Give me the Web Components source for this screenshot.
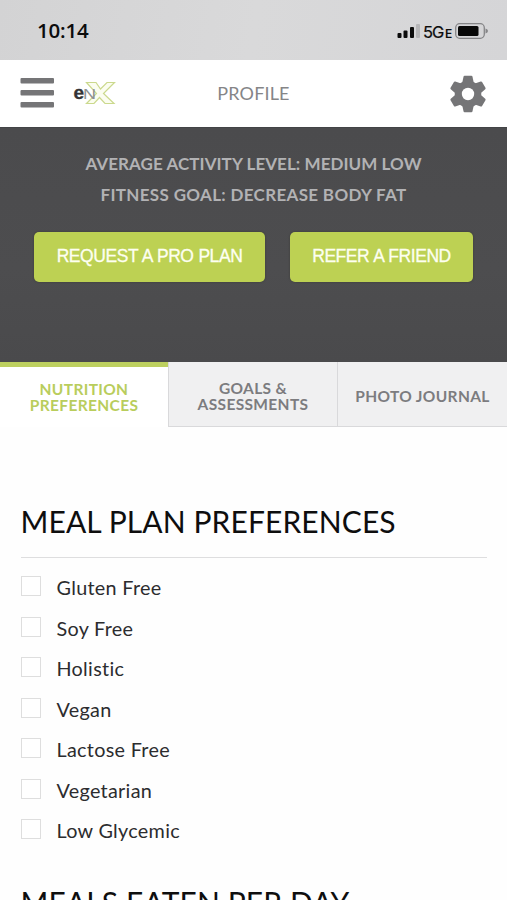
<!DOCTYPE html>
<html lang="en">
<head>
<meta charset="utf-8">
<meta name="viewport" content="width=device-width, initial-scale=1">
<title>Profile</title>
<style>
  body {
    margin: 0;
    height: 900px;
    overflow: hidden;
    background: #fefefe;
    font-family: Lato, sans-serif;
  }
</style>
</head>
<body>
<profile-page></profile-page>

<template id="status-bar">
  <style>
    :host {
      display: flex;
      justify-content: space-between;
      align-items: center;
      height: 60px;
      box-sizing: border-box;
      padding: 3px 19px 0 37px;
      background: linear-gradient(100deg, #d3d3d4, #d9d9da 50%, #d5d5d7);
      color: #0c0c0c;
      font-family: Inter, sans-serif;
    }
    time {
      font: 600 20.5px "Open Sans", sans-serif;
      letter-spacing: -0.2px;
      margin-bottom: 3px;
    }
    .right {
      display: flex;
      align-items: center;
    }
    .net {
      font-size: 16.5px;
      letter-spacing: -1px;
      margin: 1px 0 0 2px;
      width: 22px;
      -webkit-text-stroke: 0.2px;
    }
    .edge {
      font-size: 12px;
      font-weight: 600;
      margin: 4px 3px 0 0;
      width: 7px;
    }
  </style>
  <time>10:14</time>
  <div class="right">
    <svg width="24" height="16" viewBox="0 0 24 16">
      <rect x="0.5" y="9" width="4" height="5" rx="1" fill="#0c0c0c"/>
      <rect x="6.5" y="6.500" width="4" height="7.500" rx="1" fill="#0c0c0c"/>
      <rect x="13" y="3" width="4" height="11" rx="1" fill="#0c0c0c"/>
      <rect x="19" y="0" width="4" height="14" rx="1" fill="#b6b6b8"/>
    </svg>
    <span class="net">5G</span>
    <span class="edge">E</span>
    <svg width="33" height="16" viewBox="0 0 33 16" style="margin-bottom: 1px">
      <rect x="0.7" y="0.7" width="28.600" height="14.600" rx="4" fill="none" stroke="#858587" stroke-width="1.300"/>
      <rect x="3" y="3" width="20.500" height="10" rx="1.500" fill="#080808"/>
      <path d="M30.500 5.500q2.500.8 2.500 2.500t-2.500 2.500z" fill="#858587"/>
    </svg>
  </div>
</template>

<template id="app-header">
  <style>
    :host {
      display: grid;
      grid-template-columns: 1fr auto 1fr;
      align-items: center;
      height: 67px;
      box-sizing: border-box;
      padding: 0 20px;
      background: #fff;
      color: #858587;
    }
    .left {
      display: flex;
      align-items: center;
      gap: 18px;
      margin-bottom: 1px;
    }
    .title {
      font-size: 18px;
      letter-spacing: 0.15px;
      margin-bottom: 2px;
    }
    .gear {
      justify-self: end;
      margin-top: 1px;
    }
    svg {
      display: block;
    }
  </style>
  <div class="left">
    <svg width="34" height="30" viewBox="0 0 34 30" fill="#757577">
      <rect x="0.500" y="0" width="33.500" height="5.500" rx="1"/>
      <rect x="0.500" y="12" width="33.500" height="5.500" rx="1"/>
      <rect x="0.500" y="24" width="33.500" height="5.500" rx="1"/>
    </svg>
    <svg width="44" height="24" viewBox="0 0 44 24">
      <path d="M14.500 1.500H24L28.500 8L35 1.500H42.500L31.500 12.500L42 22.500H33L27.500 16.500L22 22.500H14.500L24.500 12.500Z" fill="#fbfdf0" stroke="#cbd98d" stroke-width="1.200"/>
      <text x="1.500" y="17.500" font-family="Liberation Sans, sans-serif" font-weight="700" font-size="19" fill="#343436" stroke="#343436" stroke-width="0.300">e</text>
      <text x="11" y="17.500" font-family="Liberation Sans, sans-serif" font-size="15.500" fill="#8d9092" textLength="13" lengthAdjust="spacingAndGlyphs">N</text>
    </svg>
  </div>
  <div class="title"><slot></slot></div>
  <svg class="gear" width="38" height="38" viewBox="-19 -19 38 38">
    <g fill="#757577">
      <circle r="13.300"/>
      <path id="cog" d="M-5.600-12L-4.500-17.300Q-4.300-18.200-3.400-18.200H3.400Q4.300-18.200 4.500-17.300L5.600-12V12L4.500 17.300Q4.300 18.200 3.400 18.200H-3.400Q-4.300 18.200-4.500 17.300L-5.600 12Z"/>
      <use href="#cog" transform="rotate(60)"/>
      <use href="#cog" transform="rotate(120)"/>
    </g>
    <circle r="6.200" fill="#fff"/>
  </svg>
</template>

<template id="pro-button">
  <style>
    :host {
      display: block;
    }
    button {
      display: block;
      width: 100%;
      height: 49.5px;
      padding: 0;
      border: 0;
      border-radius: 5px;
      background: #bdd153;
      color: #fdfff0;
      font: 17.5px "Liberation Sans", sans-serif;
      letter-spacing: -0.45px;
      word-spacing: 0.5px;
      -webkit-text-stroke: 0.3px;
      box-shadow: 0 0 2px rgba(40, 40, 30, 0.5);
    }
  </style>
  <button><slot></slot></button>
</template>

<template id="profile-hero">
  <style>
    :host {
      display: block;
      height: 235px;
      box-sizing: border-box;
      padding: 20px 34px 0;
      background: linear-gradient(#4b4b4d, #4d4d4f 60%, #4a4a4c);
      border-top: 1px solid #434446;
      color: #b2b2b4;
      text-align: center;
    }
    p {
      margin: 0;
      font-size: 17px;
      font-weight: 700;
      line-height: 31px;
      letter-spacing: 0.07px;
    }
    .goal {
      letter-spacing: 0.33px;
    }
    .actions {
      display: grid;
      grid-template-columns: 231px 183px;
      gap: 25px;
      margin-top: 22px;
    }
  </style>
  <p>AVERAGE ACTIVITY LEVEL: MEDIUM LOW</p>
  <p class="goal">FITNESS GOAL: DECREASE BODY FAT</p>
  <div class="actions">
    <pro-button>REQUEST A PRO PLAN</pro-button>
    <pro-button>REFER A FRIEND</pro-button>
  </div>
</template>

<template id="tab-item">
  <style>
    :host {
      display: flex;
      align-items: center;
      justify-content: center;
      box-sizing: border-box;
      padding-top: 3px;
      background: #f0f0f1;
      border-left: 1px solid #d9d9db;
      border-bottom: 1px solid #d9d9db;
      color: #7c7c7f;
      font-size: 15.5px;
      font-weight: 700;
      line-height: 16px;
      letter-spacing: 0.35px;
      text-align: center;
    }
    :host([active]) {
      background: #fff;
      border-left: 0;
      border-bottom: 0;
      border-top: 5px solid #bdd05f;
      padding-top: 0;
      color: #b9cd5c;
    }
  </style>
  <span><slot></slot></span>
</template>

<template id="tab-bar">
  <style>
    :host {
      display: grid;
      grid-template-columns: 168px 169px 170px;
      height: 65px;
    }
  </style>
  <slot></slot>
</template>

<template id="check-row">
  <style>
    :host {
      display: block;
      height: 40.5px;
    }
    label {
      display: flex;
      align-items: center;
      gap: 16px;
      color: #2c2c2e;
      font-size: 19.8px;
      line-height: 24px;
      letter-spacing: 0.3px;
    }
    input {
      appearance: none;
      width: 20px;
      height: 20px;
      margin: 0 0 2px;
      border: 1.5px solid #dedede;
      background: #fff;
    }
  </style>
  <label><input type="checkbox"><slot></slot></label>
</template>

<template id="pref-section">
  <style>
    :host {
      display: block;
      padding: 0 20.5px;
    }
    h2 {
      margin: 0 0 17px;
      padding-bottom: 18px;
      border-bottom: 1.5px solid #dededf;
      color: #0e0e0e;
      font-size: 30px;
      font-weight: 400;
      line-height: 36px;
      letter-spacing: 0.1px;
    }
  </style>
  <h2></h2>
  <slot></slot>
</template>

<template id="profile-page">
  <style>
    :host {
      display: block;
    }
    main {
      display: flex;
      flex-direction: column;
      gap: 25px;
      padding-top: 76px;
    }
  </style>
  <status-bar></status-bar>
  <app-header>PROFILE</app-header>
  <profile-hero></profile-hero>
  <tab-bar>
    <tab-item active>NUTRITION<br>PREFERENCES</tab-item>
    <tab-item>GOALS &amp;<br>ASSESSMENTS</tab-item>
    <tab-item>PHOTO JOURNAL</tab-item>
  </tab-bar>
  <main>
    <pref-section heading="MEAL PLAN PREFERENCES">
      <check-row>Gluten Free</check-row>
      <check-row>Soy Free</check-row>
      <check-row>Holistic</check-row>
      <check-row>Vegan</check-row>
      <check-row>Lactose Free</check-row>
      <check-row>Vegetarian</check-row>
      <check-row>Low Glycemic</check-row>
    </pref-section>
    <pref-section heading="MEALS EATEN PER DAY"></pref-section>
  </main>
</template>

<script>
  /**
   * Base element, clones the template that has the same id as the tag.
   */
  class TemplateElement extends HTMLElement {
    constructor () {
      super()
      const template = document.getElementById(this.localName)
      this.attachShadow({ mode: 'open' })
      this.shadowRoot.appendChild(template.content.cloneNode(true))
    }
  }

  customElements.define('status-bar', class extends TemplateElement {})
  customElements.define('app-header', class extends TemplateElement {})
  customElements.define('pro-button', class extends TemplateElement {})
  customElements.define('profile-hero', class extends TemplateElement {})
  customElements.define('tab-item', class extends TemplateElement {})
  customElements.define('tab-bar', class extends TemplateElement {})
  customElements.define('check-row', class extends TemplateElement {})

  customElements.define('pref-section', class extends TemplateElement {
    connectedCallback () {
      this.shadowRoot.querySelector('h2').textContent = this.getAttribute('heading')
    }
  })

  customElements.define('profile-page', class extends TemplateElement {})
</script>
</body>
</html>
